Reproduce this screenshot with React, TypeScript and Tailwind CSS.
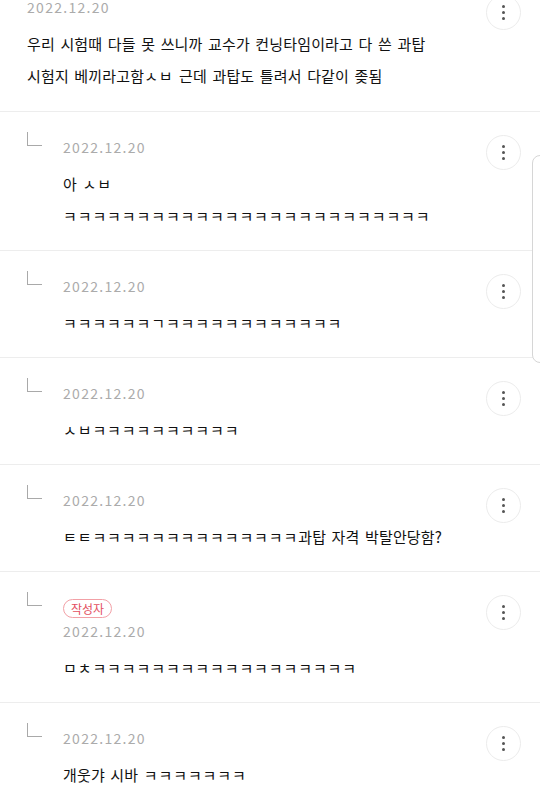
const REPLIES = [
  { lines: ['아 ㅅㅂ', 'ㅋㅋㅋㅋㅋㅋㅋㅋㅋㅋㅋㅋㅋㅋㅋㅋㅋㅋㅋㅋㅋㅋㅋㅋㅋ'] },
  { lines: ['ㅋㅋㅋㅋㅋㅋㄱㅋㅋㅋㅋㅋㅋㅋㅋㅋㅋㅋㅋ'] },
  { lines: ['ㅅㅂㅋㅋㅋㅋㅋㅋㅋㅋㅋㅋ'] },
  { lines: ['ㅌㅌㅋㅋㅋㅋㅋㅋㅋㅋㅋㅋㅋㅋㅋㅋ과탑 자격 박탈안당함?'] },
  { lines: ['ㅁㅊㅋㅋㅋㅋㅋㅋㅋㅋㅋㅋㅋㅋㅋㅋㅋㅋㅋㅋ'], author: true },
  { lines: ['개웃갸 시바 ㅋㅋㅋㅋㅋㅋㅋ'] },
];

const FONT = "font-['Noto_Sans_CJK_KR','Noto_Sans',sans-serif]";

function MoreButton() {
  return (
    <button className="mt-[3px] flex h-[35px] w-[35px] shrink-0 flex-col items-center justify-center gap-[3px] rounded-full border border-[#ececec] bg-white">
      <span className="h-[3px] w-[3px] rounded-full bg-[#555]" />
      <span className="h-[3px] w-[3px] rounded-full bg-[#555]" />
      <span className="h-[3px] w-[3px] rounded-full bg-[#555]" />
    </button>
  );
}

function DateText({ className = '' }: { className?: string }) {
  return (
    <div className={`h-[20px] text-[14px] leading-[20px] tracking-[1.3px] text-[#ababab] ${className}`}>2022.12.20</div>
  );
}

// loose jamo (ㅋㅋ, ㅅㅂ ...) sit wider apart in the original handwriting font
function Line({ text }: { text: string }) {
  const parts = text.split(/([\u3131-\u318E]+)/).filter(Boolean);
  return (
    <div className="whitespace-nowrap">
      {parts.map((p, i) =>
        /[\u3131-\u318E]/.test(p) ? (
          <span key={i} className="tracking-[0.9px]">{p}</span>
        ) : (
          <span key={i}>{p}</span>
        )
      )}
    </div>
  );
}

function Body({ lines }: { lines: string[] }) {
  return (
    <div className="mt-[11px] text-[15px] leading-[32px] tracking-[0.15px] text-[#111] [word-spacing:2px]">
      {lines.map((l, i) => (
        <Line key={i} text={l} />
      ))}
    </div>
  );
}

export default function App() {
  return (
    <div className={`relative h-[809px] w-[540px] overflow-hidden bg-white ${FONT}`}>
      {/* parent comment, scrolled partly out of view */}
      <div className="-mt-[28px] flex items-start border-b border-[#ededed] pb-[19px] pl-[27px] pr-[19px] pt-[20px]">
        <div className="flex-1">
          <DateText className="mt-[5px]" />
          <Body lines={['우리 시험때 다들 못 쓰니까 교수가 컨닝타임이라고 다 쓴 과탑', '시험지 베끼라고함ㅅㅂ 근데 과탑도 틀려서 다같이 좆됨']} />
        </div>
        <MoreButton />
      </div>

      {REPLIES.map((r, i) => (
        <div key={i} className="flex items-start border-b border-[#ededed] pb-[18px] pl-[27px] pr-[19px] pt-[20px]">
          <div className="mr-[21px] h-[14px] w-[15px] shrink-0 border-b-[1.5px] border-l-[1.5px] border-[#a9a9a9]" />
          <div className="flex-1">
            {r.author ? (
              <>
                <div className="mt-[7px] flex">
                  <span className="flex h-[19px] items-center rounded-full border border-[#f2a0a6] px-[7px] text-[12px] leading-none text-[#e3505f]">
                    작성자
                  </span>
                </div>
                <DateText className="mt-[3px]" />
              </>
            ) : (
              <DateText className="mt-[5px]" />
            )}
            <Body lines={r.lines} />
          </div>
          <MoreButton />
        </div>
      ))}

      {/* fast-scroll handle at the right edge */}
      <div className="absolute left-[532px] top-[155px] h-[208px] w-[20px] rounded-[8px] border border-[#d6d6d6] bg-white" />
    </div>
  );
}
